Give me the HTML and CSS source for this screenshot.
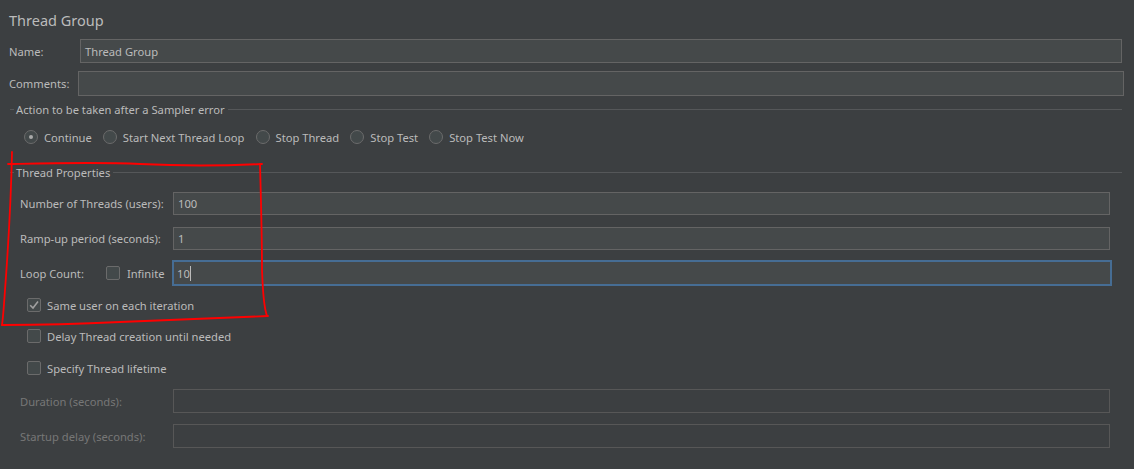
FILE: index.html
```html
<!DOCTYPE html>
<html>
<head>
<meta charset="utf-8">
<link rel="stylesheet" href="styles.css">
</head>
<body>
<div class="panel">
  <div class="title">Thread Group</div>
  <div class="row name-row">
    <span class="lbl">Name:</span>
    <div class="field name-field">Thread Group</div>
  </div>
  <div class="row comments-row">
    <span class="lbl">Comments:</span>
    <div class="field comments-field"></div>
  </div>
  <div class="sep sep-action"><span class="dash"></span><span class="sep-text">Action to be taken after a Sampler error</span><span class="line"></span></div>
  <div class="radios">
    <label class="radio"><span class="circle on"></span>Continue</label>
    <label class="radio"><span class="circle"></span>Start Next Thread Loop</label>
    <label class="radio"><span class="circle"></span>Stop Thread</label>
    <label class="radio"><span class="circle"></span>Stop Test</label>
    <label class="radio"><span class="circle"></span>Stop Test Now</label>
  </div>
  <div class="sep sep-props"><span class="dash"></span><span class="sep-text">Thread Properties</span><span class="line"></span></div>
  <div class="props">
    <div class="prow r1"><span class="plbl">Number of Threads (users):</span><div class="field pf">100</div></div>
    <div class="prow r2"><span class="plbl">Ramp-up period (seconds):</span><div class="field pf">1</div></div>
    <div class="prow r3"><span class="plbl loop"><span>Loop Count:</span><span class="inf"><span class="box"></span>Infinite</span></span><div class="field pf focus">10<span class="caret"></span></div></div>
    <div class="crow c1"><span class="box checked"><svg viewBox="0 0 14 14" width="14" height="14"><path d="M3.2 7.2 L6 10 L11 3.6" fill="none" stroke="#a0a0a0" stroke-width="1.6"/></svg></span>Same user on each iteration</div>
    <div class="crow c2"><span class="box"></span>Delay Thread creation until needed</div>
    <div class="crow c3"><span class="box"></span>Specify Thread lifetime</div>
    <div class="prow r4 disabled"><span class="plbl">Duration (seconds):</span><div class="field pf dis"></div></div>
    <div class="prow r5 disabled"><span class="plbl">Startup delay (seconds):</span><div class="field pf dis"></div></div>
  </div>
</div>
<svg class="annot" width="1134" height="469" viewBox="0 0 1134 469">
  <path d="M12 152 C11 200 8 250 5 290 C4 305 3 318 2 325" fill="none" stroke="#ff0000" stroke-width="1.8" stroke-linecap="round"/>
  <path d="M8 164 C60 163 100 162 140 164 C180 166 220 166 262 164" fill="none" stroke="#ff0000" stroke-width="1.8" stroke-linecap="round"/>
  <path d="M260 164 C261 200 262 240 262 270 C263 290 263 305 267 316" fill="none" stroke="#ff0000" stroke-width="1.8" stroke-linecap="round"/>
  <path d="M268 316 C220 318 170 320 120 322 C80 324 40 325 2 325" fill="none" stroke="#ff0000" stroke-width="1.8" stroke-linecap="round"/>
</svg>
</body>
</html>
```

FILE: styles.css
```css
html, body {
  margin: 0;
  padding: 0;
  background: #3c3f41;
  width: 1134px;
  height: 469px;
  overflow: hidden;
}
body {
  font-family: "Noto Sans", "Open Sans", sans-serif;
  font-size: 11.2px;
  color: #bbbbbb;
  position: relative;
  white-space: nowrap;
}
.panel {
  display: flex;
  flex-direction: column;
}
.title {
  height: 39px;
  line-height: 40px;
  padding-left: 9px;
  font-size: 14.5px;
  color: #bbbbbb;
}
.row {
  display: flex;
  align-items: center;
}
.lbl {
  padding-left: 9px;
}
.field {
  box-sizing: border-box;
  background: #45494a;
  border: 1px solid #646464;
  display: flex;
  align-items: center;
  padding-left: 4px;
  color: #bbbbbb;
}
.name-row {
  height: 24px;
}
.name-row .lbl { width: 71px; }
.name-field {
  width: 1042px;
  height: 24px;
}
.comments-row {
  margin-top: 8px;
  height: 25px;
}
.comments-row .lbl { width: 69px; }
.comments-field {
  width: 1046px;
  height: 25px;
}
.sep {
  display: flex;
  align-items: center;
  height: 18px;
  padding-right: 12px;
}
.sep .dash {
  width: 4px;
  height: 1px;
  background: #555759;
  margin-left: 10px;
  margin-right: 2px;
}
.sep .line {
  flex: 1;
  height: 1px;
  background: #555759;
  margin-left: 3px;
}
.sep-action {
  margin-top: 4px;
}
.radios {
  display: flex;
  align-items: center;
  height: 20px;
  margin-top: 9px;
  padding-left: 24px;
}
.radio {
  display: flex;
  align-items: center;
  margin-right: 11px;
}
.circle {
  box-sizing: border-box;
  width: 14px;
  height: 14px;
  border-radius: 50%;
  border: 1px solid #6b6b6b;
  background: #43494a;
  margin-right: 6px;
  position: relative;
}
.circle.on::after {
  content: "";
  position: absolute;
  left: 4px;
  top: 4px;
  width: 4px;
  height: 4px;
  border-radius: 50%;
  background: #a9a9a9;
}
.sep-props {
  margin-top: 16px;
}
.props {
  display: flex;
  flex-direction: column;
  padding-left: 20px;
}
.prow {
  display: flex;
  align-items: center;
}
.plbl {
  width: 153px;
  display: flex;
  align-items: center;
}
.pf {
  width: 937px;
  height: 23px;
}
.r1 { margin-top: 11px; }
.r2 { margin-top: 12px; }
.r3 { margin-top: 10px; height: 26px; }
.r3 .plbl { width: 152px; }
.loop .inf {
  display: flex;
  align-items: center;
  margin-left: 22px;
}
.loop .inf .box { margin-right: 7px; }
.focus {
  width: 940px;
  height: 26px;
  border: 2px solid #466d94;
  padding-left: 3px;
}
.caret {
  display: inline-block;
  width: 1px;
  height: 15px;
  background: #bbbbbb;
  margin-left: 0;
}
.box {
  box-sizing: border-box;
  display: inline-flex;
  width: 14px;
  height: 14px;
  border: 1px solid #6b6b6b;
  border-radius: 2px;
  background: #43494a;
}
.box svg {
  margin: -1px;
}
.crow {
  display: flex;
  align-items: center;
  height: 20px;
  padding-left: 7px;
}
.crow .box { margin-right: 6px; }
.c1 { margin-top: 9px; }
.c2 { margin-top: 11px; }
.c3 { margin-top: 12px; }
.disabled { color: #777777; }
.r4 { margin-top: 11px; }
.r5 { margin-top: 11px; }
.dis {
  background: #3c3f41;
  border-color: #575757;
  height: 24px;
}
.annot {
  position: absolute;
  left: 0;
  top: 0;
  pointer-events: none;
}
```
